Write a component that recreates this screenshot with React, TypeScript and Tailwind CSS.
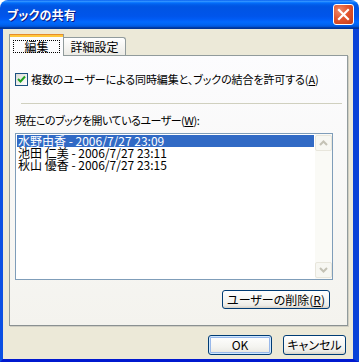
import React from "react";

function U({ c }: { c: string }) {
  return <span className="underline underline-offset-[1px]">{c}</span>;
}

function XpButton({ children, w, h, def }: { children: React.ReactNode; w: string; h: string; def?: boolean }) {
  return (
    <div
      className={
        "flex items-center justify-center rounded-[3px] border border-[#003C74] bg-[linear-gradient(to_bottom,#FFFFFF_0%,#F4F4F0_60%,#ECEBE6_85%,#D6D0C5_100%)] " +
        w + " " + h + " " +
        (def ? "shadow-[inset_0_0_0_1px_#CEE7FF,inset_0_0_0_2px_#98B8EA]" : "")
      }
    >
      <span className="whitespace-nowrap leading-[12px]">{children}</span>
    </div>
  );
}

export default function App() {
  const rows = [
    { t: "水野由香 - 2006/7/27 23:09", sel: true },
    { t: "池田 仁美 - 2006/7/27 23:11", sel: false },
    { t: "秋山 優香 - 2006/7/27 23:15", sel: false },
  ];
  return (
    <div className="h-[362px] w-[359px] bg-white text-[12px] text-black [font-family:'Noto_Sans_CJK_JP',sans-serif] [font-feature-settings:'palt']">
      <div className="flex h-full flex-col overflow-hidden rounded-t-[8px]">
        {/* title bar */}
        <div className="flex h-[29px] shrink-0 items-center justify-between bg-[linear-gradient(to_bottom,#0058EE_0%,#3593FF_4%,#288EFF_6%,#127DFF_8%,#036FFC_10%,#0262EE_14%,#0057E5_20%,#0054E3_24%,#0055EB_56%,#005BF5_66%,#026AFE_76%,#0062EF_86%,#0052D6_92%,#0040AB_94%,#003092_100%)] pl-[7px] pr-[5px]">
          <span className="text-[12px] font-bold leading-[14px] tracking-[0.2px] text-white [text-shadow:1px_1px_0_#0A1883]">ブックの共有</span>
          <div className="flex h-[21px] w-[21px] items-center justify-center rounded-[3px] border border-white bg-[radial-gradient(circle_at_30%_30%,#F08A6B_0%,#E2552F_45%,#C23B18_100%)]">
            <svg width="13" height="13" viewBox="0 0 13 13">
              <path d="M2 2 L11 11 M11 2 L2 11" stroke="white" strokeWidth="2.2" strokeLinecap="square" />
            </svg>
          </div>
        </div>
        {/* body */}
        <div className="flex flex-1 flex-col border-b-[3px] border-l-[3px] border-r-[6px] border-b-[#0019CF] border-l-[#0A4FE3] border-r-[#0A43D8] bg-[#ECE9D8] pl-[6px] pr-[5px] pt-[5px]">
          {/* tabs */}
          <div className="flex h-[21px] items-end">
            <div className="relative z-10 -mb-px flex h-[22px] w-[55px] flex-col border-x border-[#919B9C] bg-[#FCFCFE]">
              <div className="h-[3px] bg-[linear-gradient(to_bottom,#E68B2C_0px,#E68B2C_1px,#FFC73C_1px,#FFC73C_3px)]" />
              <div className="flex flex-1 items-start justify-center pt-[3px]">
                <span className="border border-dotted border-black px-[10px] leading-[11px]">編集</span>
              </div>
            </div>
            <div className="flex h-[18px] w-[62px] items-center justify-center rounded-tr-[3px] border-r border-t border-[#919B9C] bg-[linear-gradient(to_bottom,#FFFFFF,#ECEBE6)]">
              <span className="leading-[12px]">詳細設定</span>
            </div>
          </div>
          {/* panel */}
          <div className="flex h-[271px] flex-col border border-[#919B9C] border-b-[#8A9192] bg-[linear-gradient(to_bottom,#FCFCFE,#F4F3EE)] shadow-[1px_1px_0_#D0CEC3]">
            <div className="ml-[5px] mt-[17px] flex h-[13px] items-center gap-[3px]">
              <div className="flex h-[13px] w-[13px] shrink-0 items-center justify-center border border-[#1C5180] bg-[linear-gradient(135deg,#DCDCD7,#FFFFFF)]">
                <svg width="9" height="9" viewBox="0 0 9 9">
                  <path d="M1 4 L3.5 6.5 L8 1.5" stroke="#21A121" strokeWidth="2" fill="none" />
                </svg>
              </div>
              <span className="whitespace-nowrap text-[11px] leading-[13px] tracking-[-0.1px]">
                複数のユーザーによる同時編集と、ブックの結合を許可する(<U c="A" />)
              </span>
            </div>
            <div className="ml-[11px] mr-[5px] mt-[17px] h-px bg-[#D0D0BF]" />
            <div className="ml-[5px] mt-[10px] h-[13px] whitespace-nowrap text-[11px] leading-[13px] tracking-[-0.5px]">
              現在このブックを開いているユーザー(<U c="W" />):
            </div>
            <div className="ml-[5px] mt-[6px] flex h-[147px] w-[318px] border border-[#7F9DB9] bg-white">
              <div className="flex-1 p-[1px]">
                {rows.map((r) => (
                  <div
                    key={r.t}
                    className={
                      "h-[12px] whitespace-nowrap pl-[1px] leading-[12px] " +
                      (r.sel ? "bg-[#316AC5] text-white" : "")
                    }
                  >
                    {r.t}
                  </div>
                ))}
              </div>
              <div className="flex w-[17px] flex-col justify-between bg-[#FAFAF6] py-[1px]">
                <div className="flex h-[16px] items-center justify-center rounded-[2px] border border-[#E8E6DC] bg-[#F7F7F2]">
                  <svg width="9" height="6" viewBox="0 0 9 6">
                    <path d="M1 5 L4.5 1.5 L8 5" stroke="#C4C2B5" strokeWidth="2" fill="none" />
                  </svg>
                </div>
                <div className="flex h-[16px] items-center justify-center rounded-[2px] border border-[#E8E6DC] bg-[#F7F7F2]">
                  <svg width="9" height="6" viewBox="0 0 9 6">
                    <path d="M1 1 L4.5 4.5 L8 1" stroke="#C4C2B5" strokeWidth="2" fill="none" />
                  </svg>
                </div>
              </div>
            </div>
            <div className="mr-[17px] mt-[10px] self-end">
              <XpButton w="w-[108px]" h="h-[19px]">
                ユーザーの削除(<U c="R" />)
              </XpButton>
            </div>
          </div>
          {/* bottom buttons */}
          <div className="mt-[9px] flex justify-end gap-[11px] pr-[2px]">
            <XpButton w="w-[64px]" h="h-[20px]" def>
              OK
            </XpButton>
            <XpButton w="w-[63px]" h="h-[20px]">
              キャンセル
            </XpButton>
          </div>
        </div>
      </div>
    </div>
  );
}
